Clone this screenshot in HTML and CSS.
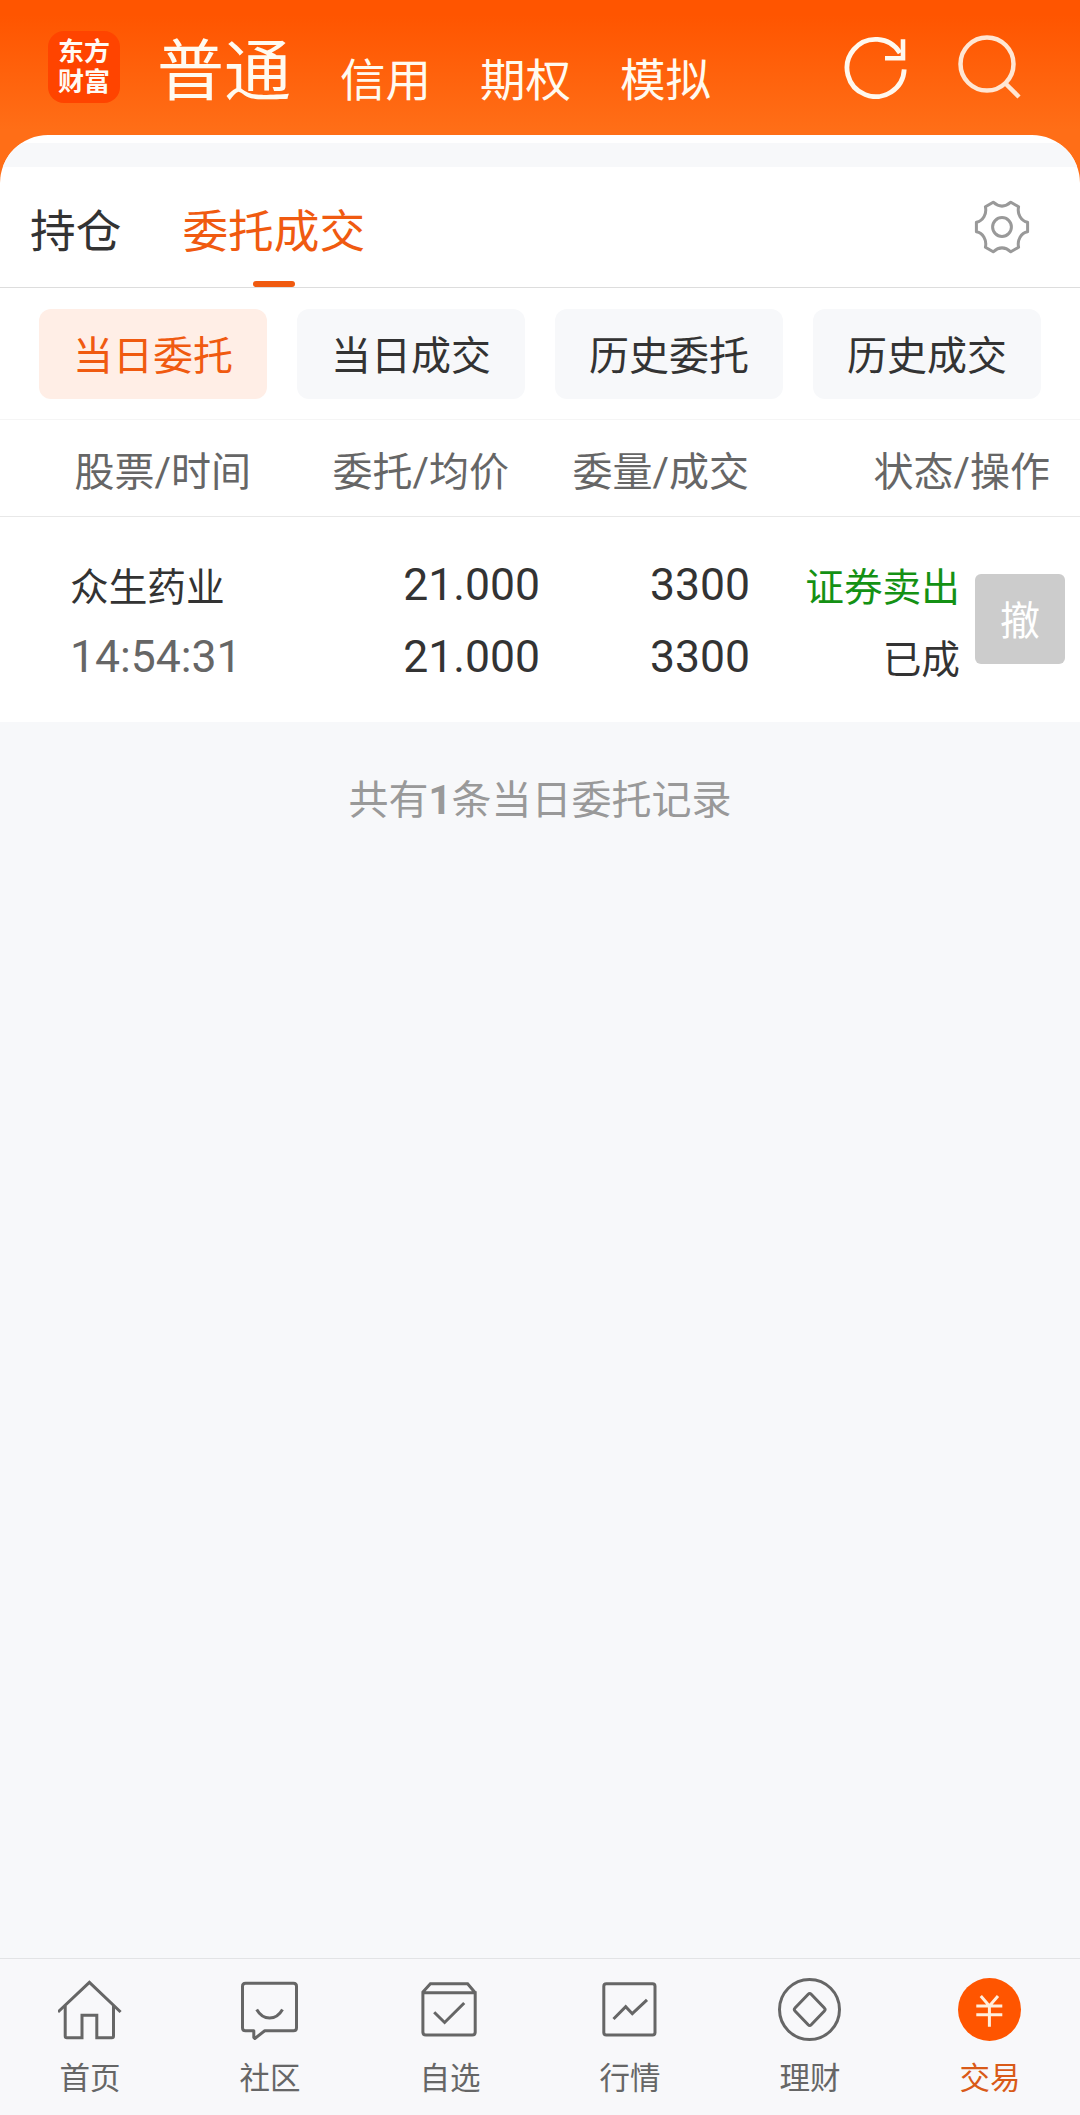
FILE: index.html
```html
<!DOCTYPE html>
<html lang="zh-CN">
<head>
  <meta charset="UTF-8">
  <meta name="viewport" content="width=device-width, initial-scale=1.0">
  <title>委托成交</title>
  <link rel="stylesheet" href="styles.css">
</head>
<body>
  <header class="top-bar">
    <div class="logo">东方<br>财富</div>
    <nav class="accounts">
      <a class="account active">普通</a>
      <a class="account">信用</a>
      <a class="account">期权</a>
      <a class="account">模拟</a>
    </nav>
    <div class="top-icons">
      <svg width="64" height="64" viewBox="0 0 64 64" fill="none" stroke="#fff8ee" stroke-width="4.8">
        <path d="M60.2 34.3A28.6 28.6 0 1 1 56 18"/>
        <path d="M59 4.3v19H41" stroke-width="4.6"/>
      </svg>
      <svg width="64" height="64" viewBox="0 0 64 64" fill="none" stroke="#ffe6d3" stroke-width="4.5">
        <circle cx="30" cy="29" r="26.5"/>
        <path d="M48.5 48.5L62 62"/>
      </svg>
    </div>
  </header>

  <main class="panel">
    <div class="panel-gap"></div>

    <div class="tabs">
      <a class="tab">持仓</a>
      <a class="tab active">委托成交</a>
      <svg class="gear" width="60" height="60" viewBox="0 0 60 60" fill="none" stroke="#999" stroke-width="3">
        <path stroke-linejoin="round" d="M21.2 5.2Q30 13 38.8 5.2L46.6 9.8C45 17 49 24 55.6 25.2V34.8C49 36 45 43 46.6 50.2L38.8 54.8Q30 47 21.2 54.8L13.4 50.2C15 43 11 36 4.4 34.8V25.2C11 24 15 17 13.4 9.8Z"/>
        <circle cx="30" cy="30" r="9.4"/>
      </svg>
    </div>

    <div class="filters">
      <button class="filter active">当日委托</button>
      <button class="filter">当日成交</button>
      <button class="filter">历史委托</button>
      <button class="filter">历史成交</button>
    </div>

    <div class="table-head">
      <span>股票/时间</span>
      <span>委托/均价</span>
      <span>委量/成交</span>
      <span>状态/操作</span>
    </div>

    <div class="order">
      <div class="cell name">
        <span>众生药业</span>
        <span class="num time">14:54:31</span>
      </div>
      <div class="cell">
        <span class="num">21.000</span>
        <span class="num">21.000</span>
      </div>
      <div class="cell">
        <span class="num">3300</span>
        <span class="num">3300</span>
      </div>
      <div class="cell">
        <span class="sell">证券卖出</span>
        <span>已成</span>
      </div>
      <button class="cancel">撤</button>
    </div>
  </main>

  <p class="summary">共有<b>1</b>条当日委托记录</p>

  <nav class="bottom-nav">
    <a class="nav-item">
      <svg width="64" height="64" viewBox="0 0 64 64">
        <path d="M0 34L31.4 4.3L62.6 34"/>
        <path d="M7.2 28V58q0 1.7 1.7 1.7H24V37.3H38.8V59.7H53.8q1.7 0 1.7-1.7V28"/>
      </svg>
      <span>首页</span>
    </a>
    <a class="nav-item">
      <svg width="64" height="64" viewBox="0 0 64 64">
        <path stroke-linejoin="round" d="M7.5 5.3H55.5q3 0 3 3V49.7q0 3-3 3H26.8L16.8 60.5L15.8 59.5V52.7H7.5q-3 0-3-3V8.3q0-3 3-3Z"/>
        <path d="M18.7 31.5Q23.5 40 31.6 40T44.5 31.5"/>
      </svg>
      <span>社区</span>
    </a>
    <a class="nav-item">
      <svg width="64" height="64" viewBox="0 0 64 64">
        <path d="M4.9 14.7H57.2V54q0 3-3 3H7.9q-3 0-3-3V14L12.4 5.7H49.6L57.2 14.7"/>
        <path d="M16.2 34.2L26.6 44.5L46.2 25"/>
      </svg>
      <span>自选</span>
    </a>
    <a class="nav-item">
      <svg width="64" height="64" viewBox="0 0 64 64">
        <rect x="5.8" y="5.7" width="51.2" height="51.3" rx="2.5"/>
        <path d="M15.5 41L27.7 28.7L34.3 35.7L49 21.8"/>
      </svg>
      <span>行情</span>
    </a>
    <a class="nav-item">
      <svg width="64" height="64" viewBox="0 0 64 64">
        <circle cx="31.5" cy="31.5" r="30"/>
        <path stroke-linejoin="round" d="M30.2 16.2q1.5-1.5 3 0L46.4 30q1.5 1.5 0 3L33.2 46.8q-1.5 1.5-3 0L17 33q-1.5-1.5 0-3Z"/>
      </svg>
      <span>理财</span>
    </a>
    <a class="nav-item active">
      <svg width="64" height="64" viewBox="0 0 64 64">
        <circle class="coin" cx="31.5" cy="31.5" r="31.5"/>
        <path class="yen" d="M22.8 18L31.4 28L40 18M18.3 28H44.3M18.3 36.7H44.3M31.4 28V48.7"/>
      </svg>
      <span>交易</span>
    </a>
  </nav>
</body>
</html>
```
FILE: styles.css
```css
* {
  box-sizing: border-box;
}

body {
  margin: 0;
  height: 2115px;
  display: flex;
  flex-direction: column;
  background: #f7f8fa;
  color: #333;
  font-family: Roboto, "Noto Sans CJK SC", sans-serif;
  font-size: 40px;
}

button {
  border: 0;
  padding: 0;
  font: inherit;
  color: inherit;
}

/* 顶部 */
.top-bar {
  height: 185px;
  padding: 31px 59px 0 48px;
  display: flex;
  align-items: flex-start;
  background: linear-gradient(#ff5500 0, #ff5500 15px, #ff6e17 130px);
}

.logo {
  width: 72px;
  height: 72px;
  padding-top: 6px;
  border-radius: 16px;
  background: #ff4400;
  color: #fffaf4;
  font-size: 26px;
  font-weight: 700;
  line-height: 30px;
  text-align: center;
}

.accounts {
  margin-left: 37px;
  display: flex;
  align-items: flex-start;
  gap: 49px;
}

.account {
  color: #fffaf0;
  font-size: 45.5px;
  line-height: 102px;
}

.account.active {
  font-size: 67px;
  line-height: 82px;
}

.top-icons {
  margin-left: auto;
  padding-top: 4px;
  display: flex;
  gap: 49px;
}

/* 白色面板 */
.panel {
  margin-top: -50px;
  padding-top: 8px;
  border-radius: 48px 48px 0 0;
  background: #fff;
  overflow: hidden;
}

.panel-gap {
  height: 24px;
  background: #f7f8fa;
}

.tabs {
  height: 121px;
  padding: 0 48px 0 30px;
  display: flex;
  gap: 61px;
  border-bottom: 1px solid #ddd;
}

.tab {
  display: flex;
  flex-direction: column;
  align-items: center;
  justify-content: space-between;
  font-size: 45.7px;
  line-height: 131px;
}

.tab.active {
  color: #f05a10;
}

.tab.active::after {
  content: "";
  width: 42px;
  height: 6px;
  margin-top: -17px;
  border-radius: 3px;
  background: #f05a10;
}

.gear {
  margin: 30px 0 0 auto;
}

.filters {
  height: 132px;
  padding: 21px 39px 0;
  display: flex;
  gap: 30px;
  border-bottom: 1px solid #f5f5f5;
}

.filter {
  width: 228px;
  height: 90px;
  padding-top: 6px;
  border-radius: 12px;
  background: #f7f8fa;
  line-height: 84px;
}

.filter.active {
  background: #ffeee6;
  color: #f05a10;
}

.table-head {
  height: 97px;
  display: grid;
  grid-template-columns: 251px 258px 240px 301px;
  border-bottom: 1px solid #e8e8e8;
  color: #666;
  line-height: 106px;
  text-align: right;
}

.order {
  height: 205px;
  padding-top: 33px;
  display: grid;
  grid-template-columns: 280px 260px 210px 210px 90px;
  align-items: start;
}

.cell {
  display: flex;
  flex-direction: column;
  font-size: 38.7px;
  line-height: 69px;
  text-align: right;
}

.cell span {
  padding-top: 3px;
}

.cell .num {
  padding: 0 0 1px;
  font-size: 44.5px;
  line-height: 71px;
}

.name {
  padding-left: 70px;
  text-align: left;
}

.time {
  color: #666;
}

.sell {
  color: #149114;
}

.cancel {
  width: 90px;
  height: 90px;
  margin: 24px 0 0 15px;
  padding-top: 6px;
  border-radius: 6px;
  background: #ccc;
  color: #fff;
  line-height: 84px;
}

.summary {
  margin: 49px 0 0;
  color: #999;
  line-height: 60px;
  text-align: center;
}

/* 底部导航 */
.bottom-nav {
  height: 157px;
  margin-top: auto;
  padding-top: 19px;
  display: grid;
  grid-template-columns: repeat(6, 1fr);
  border-top: 1px solid #e2e3e5;
  background: #f8f8fa;
  color: #666;
  font-size: 30.5px;
}

.nav-item {
  display: flex;
  flex-direction: column;
  align-items: center;
  line-height: 73px;
}

.nav-item svg {
  fill: none;
  stroke: #666;
  stroke-width: 3;
}

.nav-item.active {
  color: #d95a18;
}

.nav-item .coin {
  fill: #ff5500;
  stroke: none;
}

.nav-item .yen {
  stroke: #ffeedd;
}
```
